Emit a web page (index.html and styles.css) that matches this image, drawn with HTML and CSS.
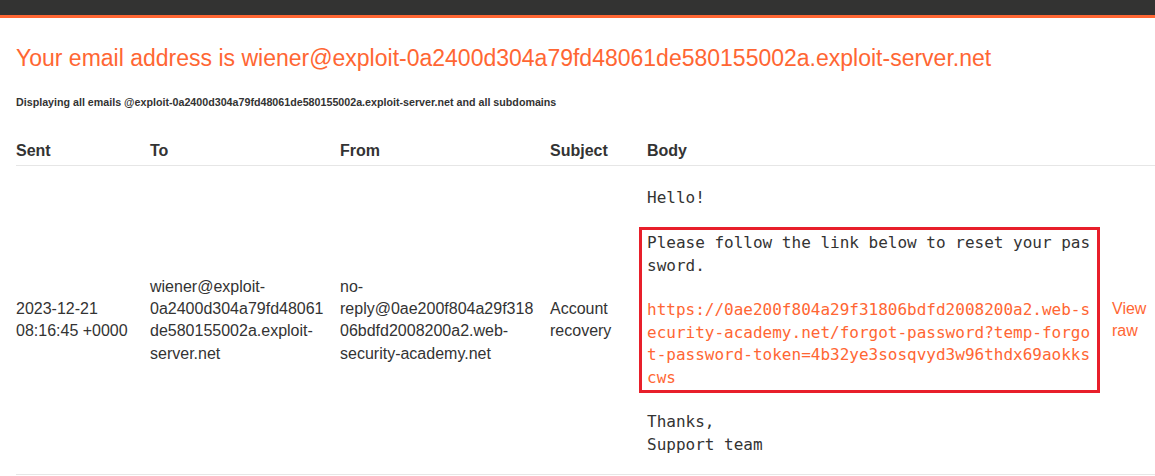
FILE: index.html
```html
<!DOCTYPE html>
<html>
<head>
<meta charset="utf-8">
<link rel="stylesheet" href="styles.css">
</head>
<body>
<div class="topbar"></div>
<main class="page">
  <h1 class="title">Your email address is wiener@exploit-0a2400d304a79fd48061de580155002a.exploit-server.net</h1>
  <p class="note">Displaying all emails @exploit-0a2400d304a79fd48061de580155002a.exploit-server.net and all subdomains</p>
  <table class="emails">
    <colgroup>
      <col class="c-sent"><col class="c-to"><col class="c-from"><col class="c-subj"><col class="c-body"><col class="c-raw">
    </colgroup>
    <thead>
      <tr><th>Sent</th><th>To</th><th>From</th><th>Subject</th><th>Body</th><th></th></tr>
    </thead>
    <tbody>
      <tr>
        <td>2023-12-21 08:16:45 +0000</td>
        <td>wiener@exploit-0a2400d304a79fd48061de580155002a.exploit-server.net</td>
        <td>no-reply@0ae200f804a29f31806bdfd2008200a2.web-security-academy.net</td>
        <td>Account recovery</td>
        <td class="body-cell">
          <div class="mail">
            <div class="para">Hello!</div>
            <div class="para hl">Please follow the link below to reset your password.

<a class="link" href="#">https://0ae200f804a29f31806bdfd2008200a2.web-security-academy.net/forgot-password?temp-forgot-password-token=4b32ye3sosqvyd3w96thdx69aokkscws</a></div>
            <div class="para">Thanks,
Support team</div>
          </div>
        </td>
        <td class="raw-cell"><a class="link" href="#">View raw</a></td>
      </tr>
    </tbody>
  </table>
</main>
</body>
</html>
```
FILE: styles.css
```css
html, body {
  margin: 0;
  padding: 0;
  background: #fff;
}
body {
  font-family: "Liberation Sans", Arial, sans-serif;
  color: #333;
  overflow: hidden;
}
.topbar {
  height: 15px;
  background: #333332;
  border-bottom: 3px solid #ff6633;
}
.page {
  padding-left: 16px;
}
.title {
  margin: 26px 0 0 0;
  font-size: 23px;
  line-height: 28px;
  font-weight: normal;
  color: #ff6633;
}
.note {
  margin: 24px 0 0 0;
  font-size: 10.7px;
  line-height: 13px;
  font-weight: bold;
  color: #333;
}
.emails {
  margin-top: 30px;
  border-collapse: collapse;
  table-layout: fixed;
  width: 1139px;
  font-size: 16px;
  line-height: 22.4px;
}
.c-sent { width: 134px; }
.c-to { width: 190px; }
.c-from { width: 210px; }
.c-subj { width: 97px; }
.c-body { width: 465px; }
.c-raw { width: 43px; }
.emails th {
  text-align: left;
  font-weight: bold;
  padding: 1px 12px 3px 0;
  border-bottom: 1px solid #e6e6e6;
}
.emails td {
  vertical-align: middle;
  padding: 0 12px 0 0;
  overflow-wrap: break-word;
  border-bottom: 1px solid #e6e6e6;
}
.emails td.body-cell {
  padding: 21px 18px 18px 0;
}
.emails td.raw-cell {
  padding-right: 0;
}
.mail {
  font-family: "DejaVu Sans Mono", monospace;
  font-size: 16px;
  line-height: 22.4px;
  color: #333;
}
.para {
  white-space: pre-wrap;
  word-break: break-all;
  margin-bottom: 22.4px;
}
.para:last-child {
  margin-bottom: 0;
}
.hl {
  border: 3px solid #e81f2a;
  margin: -5px -6px 18.4px -8px;
  padding: 2px 3px 1px 5px;
}
.link {
  color: #ff6633;
  text-decoration: none;
}
```
